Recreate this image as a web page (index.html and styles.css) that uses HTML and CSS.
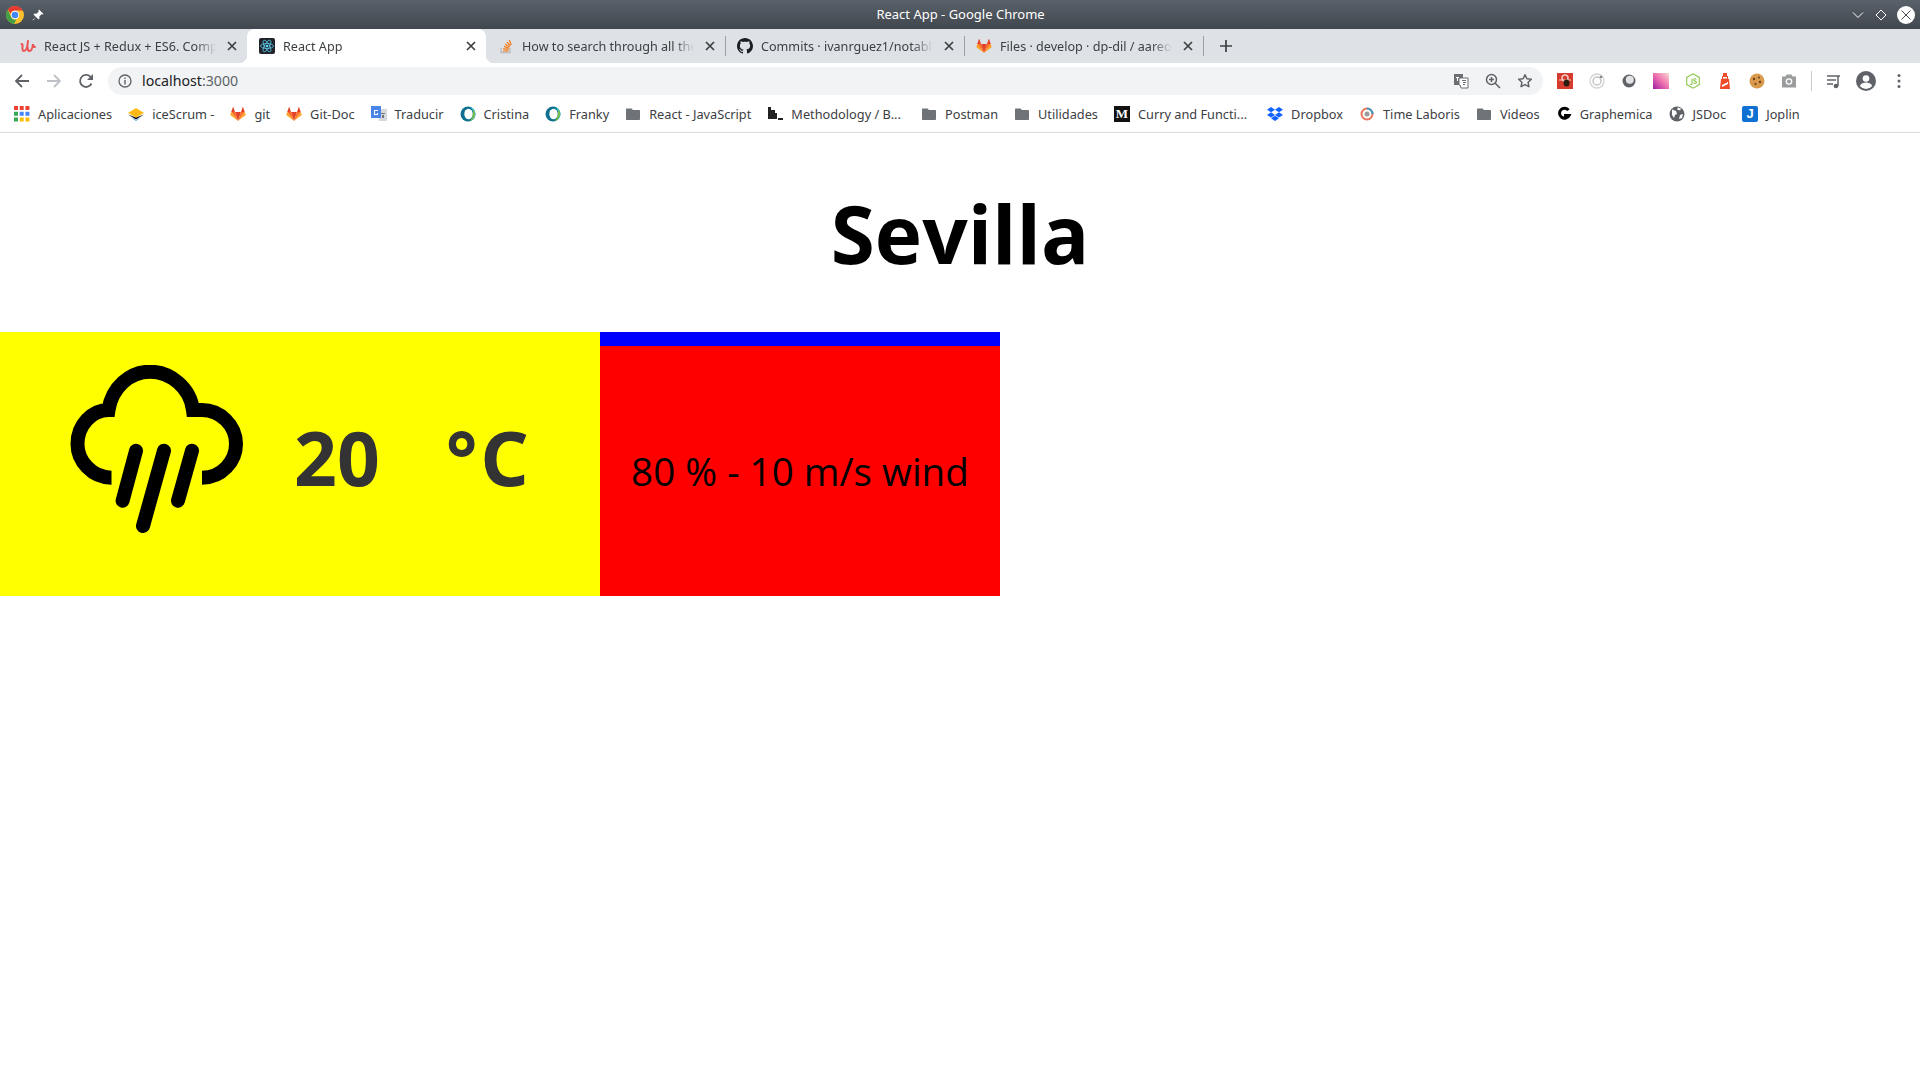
FILE: index.html
```html
<!DOCTYPE html>
<html lang="es">
<head>
  <meta charset="UTF-8">
  <title>React App</title>
  <link rel="stylesheet" href="styles.css">
</head>
<body>
  <svg class="defs" width="0" height="0">
    <symbol id="gitlab" viewBox="0 0 16 16">
      <path fill="#e24329" d="M8 15 11 6H5z"/>
      <path fill="#fc6d26" d="M8 15 5 6H1.2zM8 15l3-9h3.8z"/>
      <path fill="#fca326" d="M1.2 6 .4 8.6c-.1.3 0 .5.2.7L8 15zM14.8 6l.8 2.6c.1.3 0 .5-.2.7L8 15z"/>
      <path fill="#e24329" d="M1.2 6H5L3.4 1.2c-.1-.2-.4-.2-.5 0zM14.8 6H11l1.6-4.8c.1-.2.4-.2.5 0z"/>
    </symbol>
    <symbol id="folder" viewBox="0 0 16 16">
      <path fill="#6f7276" d="M2 2.5h4.5L8 4h6c.6 0 1 .4 1 1v8c0 .6-.4 1-1 1H2c-.6 0-1-.4-1-1V3.500c0-.6.4-1 1-1z"/>
    </symbol>
    <symbol id="close" viewBox="0 0 16 16">
      <path fill="none" stroke="#3c4043" stroke-width="1.700" d="M4 4l8 8M12 4l-8 8"/>
    </symbol>
    <symbol id="ring" viewBox="0 0 16 16">
      <circle cx="8" cy="8" r="7.500" fill="#0f6f8f"/>
      <path fill="#3ecbe0" d="M8 .5a7.500 7.500 0 0 1 0 15 5 7 0 0 0 0-15z"/>
      <path fill="#79bd3f" d="M13 3a7.500 7.500 0 0 1-4 12.400c3-1.500 4.500-7 4-12.400z"/>
      <ellipse cx="8.500" cy="8" rx="4.200" ry="5.200" fill="#fff"/>
    </symbol>
  </svg>

  <header class="browser">
    <div class="titlebar">
      <div class="title-left">
        <svg class="chrome-logo" width="18" height="18" viewBox="0 0 18 18">
          <circle cx="9" cy="9" r="9" fill="#fbc02d"/>
          <path fill="#e53935" d="M9 0a9 9 0 0 1 7.800 4.500H9a4.500 4.500 0 0 0-4.300 3.200L1.800 3.600A9 9 0 0 1 9 0z"/>
          <path fill="#43a047" d="M1.800 3.600 5.100 11.300A4.500 4.500 0 0 0 10.500 13.300L8 18A9 9 0 0 1 1.800 3.600z"/>
          <circle cx="9" cy="9" r="4.200" fill="#fff"/>
          <circle cx="9" cy="9" r="3.300" fill="#4285f4"/>
        </svg>
        <svg class="pin" width="12" height="12" viewBox="0 0 12 12"><path fill="#fff" d="M7 .5 11.500 5l-1 .6-1-.3L7.300 7.500 7.500 9.500 6.500 10.500 4 8 1 11.500.5 11 4 8 1.500 5.500 2.500 4.500 4.500 4.700 6.700 2.500 6.400 1.500z"/></svg>
      </div>
      <div class="window-title">React App - Google Chrome</div>
      <div class="window-controls">
        <svg width="14" height="14" viewBox="0 0 14 14"><path fill="none" stroke="#fff" d="M2 4.500l5 5 5-5"/></svg>
        <svg width="14" height="14" viewBox="0 0 14 14"><path fill="none" stroke="#fff" d="M7 2l5 5-5 5-5-5z"/></svg>
        <svg width="18" height="18" viewBox="0 0 18 18"><circle cx="9" cy="9" r="9" fill="#fff"/><path fill="none" stroke="#41474e" d="M4.500 4.500l9 9M13.500 4.500l-9 9"/></svg>
      </div>
    </div>

    <div class="tabstrip">
      <div class="tab">
        <svg class="favicon" viewBox="0 0 16 16"><path fill="none" stroke="#ec5252" stroke-width="2" stroke-linecap="round" d="M1.500 6c1 0 1.200 1 1 2.500C2.200 11 2.500 13 4 13c2 0 3.500-4 4-10M7.500 9c0 3 .8 4 2 4 2 0 3-3 3.500-7 .2 2 .8 3 2 3"/></svg>
        <span class="tab-title">React JS + Redux + ES6. Completo</span>
        <svg class="tab-close"><use href="#close"/></svg>
      </div>
      <div class="tab active">
        <svg class="favicon" viewBox="0 0 16 16"><rect width="16" height="16" rx="2" fill="#20232a"/><g fill="none" stroke="#61dafb" stroke-width=".7"><ellipse cx="8" cy="8" rx="6.500" ry="2.500"/><ellipse cx="8" cy="8" rx="6.500" ry="2.500" transform="rotate(60 8 8)"/><ellipse cx="8" cy="8" rx="6.500" ry="2.500" transform="rotate(120 8 8)"/></g><circle cx="8" cy="8" r="1.300" fill="#61dafb"/></svg>
        <span class="tab-title">React App</span>
        <svg class="tab-close"><use href="#close"/></svg>
      </div>
      <div class="tab">
        <svg class="favicon" viewBox="0 0 16 16"><path fill="none" stroke="#bcbbbb" stroke-width="1.300" d="M3 10v4.500h9V10"/><path fill="none" stroke="#f48024" stroke-width="1.300" d="M5 12.800h5.500M5.200 10.600l5.400.7M5.900 8.300l5.100 1.900M7.100 6l4.500 3M9 3.800l3.300 4.100M11.300 2l2 4.900"/></svg>
        <span class="tab-title">How to search through all the notes</span>
        <svg class="tab-close"><use href="#close"/></svg>
      </div>
      <div class="tab">
        <svg class="favicon" viewBox="0 0 16 16"><path fill="#1b1f23" d="M8 0C3.600 0 0 3.600 0 8c0 3.500 2.300 6.500 5.500 7.600.4.100.5-.2.500-.4v-1.400c-2.200.5-2.700-1-2.700-1-.4-.9-.9-1.200-.9-1.200-.7-.5.100-.5.100-.5.800.1 1.200.8 1.200.8.700 1.200 1.900.9 2.300.7.100-.5.300-.9.500-1.100-1.800-.2-3.600-.9-3.600-4 0-.9.300-1.600.8-2.100-.1-.2-.4-1 .1-2.100 0 0 .7-.2 2.200.8.600-.2 1.300-.3 2-.3s1.400.1 2 .3c1.500-1 2.200-.8 2.200-.8.400 1.100.2 1.900.1 2.100.5.600.8 1.300.8 2.100 0 3.100-1.900 3.700-3.700 3.900.3.300.6.800.6 1.500v2.200c0 .2.100.5.600.4C13.700 14.500 16 11.500 16 8c0-4.400-3.600-8-8-8z"/></svg>
        <span class="tab-title">Commits · ivanrguez1/notable-notes</span>
        <svg class="tab-close"><use href="#close"/></svg>
      </div>
      <div class="tab">
        <svg class="favicon"><use href="#gitlab"/></svg>
        <span class="tab-title">Files · develop · dp-dil / aareon-api</span>
        <svg class="tab-close"><use href="#close"/></svg>
      </div>
      <svg class="new-tab" width="16" height="16" viewBox="0 0 16 16"><path fill="none" stroke="#3c4043" stroke-width="1.700" d="M8 2v12M2 8h12"/></svg>
    </div>

    <div class="toolbar">
      <button class="tool"><svg width="16" height="16" viewBox="0 0 16 16"><path fill="none" stroke="#5f6368" stroke-width="1.800" d="M15 8H2M8 2 2 8l6 6"/></svg></button>
      <button class="tool"><svg width="16" height="16" viewBox="0 0 16 16"><path fill="none" stroke="#bdc1c6" stroke-width="1.800" d="M1 8h13M8 2l6 6-6 6"/></svg></button>
      <button class="tool"><svg width="16" height="16" viewBox="0 0 16 16"><path fill="none" stroke="#5f6368" stroke-width="1.800" d="M13.500 10.500A6 6 0 1 1 12.300 3.700L14 5.500"/><path fill="#5f6368" d="M15 1v6H9z"/></svg></button>
      <div class="omnibox">
        <svg class="info" width="14" height="14" viewBox="0 0 14 14"><circle cx="7" cy="7" r="6" fill="none" stroke="#5f6368" stroke-width="1.300"/><path fill="#5f6368" d="M6.300 6h1.400v4.500H6.300zM6.300 3.500h1.400v1.400H6.300z"/></svg>
        <span class="url">localhost<span class="port">:3000</span></span>
        <div class="omni-actions">
          <button class="tool"><svg width="16" height="16" viewBox="0 0 16 16"><path fill="#6b6f73" d="M1 1h9v11H1z"/><path fill="#fff" stroke="#6b6f73" d="M6 5h9v10H8l-1-3H6z"/><path fill="#fff" d="M3 4h3v1H5v3H4V5H3z"/><path fill="#6b6f73" d="M9 7h4v1h-4zM10 9h3v1h-3zM10 11h2v1h-2z"/></svg></button>
          <button class="tool"><svg width="16" height="16" viewBox="0 0 16 16"><circle cx="6.500" cy="6.500" r="5" fill="none" stroke="#5f6368" stroke-width="1.500"/><path fill="none" stroke="#5f6368" stroke-width="1.500" d="M10 10l5 5M4 6.500h5M6.500 4v5"/></svg></button>
          <button class="tool"><svg width="16" height="16" viewBox="0 0 16 16"><path fill="none" stroke="#5f6368" stroke-width="1.500" stroke-linejoin="round" d="M8 1.800l1.900 4 4.400.5-3.200 3 .8 4.400L8 11.600l-3.900 2.100.8-4.400-3.200-3 4.400-.5z"/></svg></button>
        </div>
      </div>
      <div class="extensions">
        <button class="tool"><svg width="16" height="16" viewBox="0 0 16 16"><rect width="16" height="16" fill="#d63c2e"/><circle cx="8" cy="5" r="3" fill="none" stroke="#f6c9c3" stroke-width="1.500"/><path fill="none" stroke="#f6c9c3" d="M2 7h12"/><ellipse cx="9.500" cy="10" rx="3" ry="3.500" fill="#2b1a10"/></svg></button>
        <button class="tool"><svg width="16" height="16" viewBox="0 0 16 16"><circle cx="8" cy="8" r="7" fill="none" stroke="#d2d3d3" stroke-width="1.300"/><circle cx="8" cy="8" r="4" fill="none" stroke="#c4c5c5" stroke-width="1.500"/><circle cx="12" cy="4" r="1.300" fill="#8a8a8a"/></svg></button>
        <button class="tool"><svg width="16" height="16" viewBox="0 0 16 16"><circle cx="8" cy="8" r="6.500" fill="#5f6368"/><circle cx="8.800" cy="6.800" r="4" fill="#e2e3e4"/></svg></button>
        <button class="tool"><span class="ext-pink"></span></button>
        <button class="tool"><svg width="16" height="16" viewBox="0 0 16 16"><path fill="#fff" stroke="#8cc84b" stroke-width="1.100" d="M8 .8l6.300 3.600v7.200L8 15.200l-6.300-3.600V4.400z"/><path fill="none" stroke="#8cc84b" stroke-width="1.100" d="M7 5.500v5c0 1-1 1.300-1.800.7M11.300 6.500c-.8-1.200-2.800-.8-2.600.6.200 1.300 2.900.8 2.800 2.300-.1 1.300-2.400 1.400-3 .2"/></svg></button>
        <button class="tool"><svg width="16" height="16" viewBox="0 0 16 16"><path fill="#ee4b2b" d="M6 0h4v3h1v3h1l1 10H3L4 6h1V3h1z"/><path fill="#fff" d="M6 4h4v1.500H6zM5 12l6-3v2l-6 3z"/></svg></button>
        <button class="tool"><svg width="16" height="16" viewBox="0 0 16 16"><circle cx="8" cy="8" r="7.500" fill="#d99a4e"/><circle cx="5" cy="6" r="1.200" fill="#6a3d1a"/><circle cx="10" cy="4.500" r="1" fill="#6a3d1a"/><circle cx="11" cy="9" r="1.200" fill="#6a3d1a"/><circle cx="6.500" cy="11" r="1.100" fill="#6a3d1a"/></svg></button>
        <button class="tool"><svg width="16" height="16" viewBox="0 0 16 16"><path fill="#9a9c9e" d="M5.500 1.500h5l1 2H15v11H1v-11h3.500z"/><circle cx="8" cy="8.500" r="3.300" fill="#fff"/><circle cx="8" cy="8.500" r="2" fill="#9a9c9e"/></svg></button>
        <span class="tool-sep"></span>
        <button class="tool"><svg width="16" height="16" viewBox="0 0 16 16"><path fill="none" stroke="#5f6368" stroke-width="1.500" d="M1 3h13M1 7h9M1 11h6M12 3v10"/><circle cx="10" cy="13" r="2.300" fill="#5f6368"/></svg></button>
        <button class="tool"><svg width="20" height="20" viewBox="0 0 20 20"><circle cx="10" cy="10" r="10" fill="#5f6368"/><circle cx="10" cy="7.500" r="3.300" fill="#fff"/><path fill="#fff" d="M3.800 15c1-2.600 4-3.500 6.200-3.500s5.200.9 6.200 3.500a8 8 0 0 1-12.400 0z"/></svg></button>
        <button class="tool tool-menu"><svg width="4" height="16" viewBox="0 0 4 16"><circle cx="2" cy="2.500" r="1.500" fill="#5f6368"/><circle cx="2" cy="8" r="1.500" fill="#5f6368"/><circle cx="2" cy="13.500" r="1.500" fill="#5f6368"/></svg></button>
      </div>
    </div>

    <nav class="bookmarks">
      <a class="bookmark"><svg viewBox="0 0 14 14"><path fill="#ea4335" d="M0 0h3.500v3.500H0zM5 0h3.500v3.500H5zM10 0h3.500v3.500H10z"/><path fill="#34a853" d="M0 5h3.500v3.500H0zM0 10h3.500v3.500H0z"/><path fill="#4285f4" d="M5 5h3.500v3.500H5zM10 5h3.500v3.500H10z"/><path fill="#fbbc04" d="M5 10h3.500v3.500H5zM10 10h3.500v3.500H10z"/></svg>Aplicaciones</a>
      <a class="bookmark"><svg viewBox="0 0 16 16"><path fill="#111" d="M0 8.500l8 5 8-5-8 3z"/><path fill="#fdb913" d="M0 7l8-5 8 5-8 4.500z"/><path fill="#3a9bd8" d="M3 11l5 3 5-3-5 4z"/></svg>iceScrum -</a>
      <a class="bookmark"><svg><use href="#gitlab"/></svg>git</a>
      <a class="bookmark"><svg><use href="#gitlab"/></svg>Git-Doc</a>
      <a class="bookmark"><svg viewBox="0 0 16 16"><path fill="#d5d8dc" d="M6 3h10v12H8z"/><path fill="#4a86e8" d="M0 0h10v12H0z"/><path fill="#fff" d="M3 4h4v1H4v3h2V7h1v2H3z"/><path fill="#777" d="M10 7h4v1h-4zM11 9h2v3h-2z"/></svg>Traducir</a>
      <a class="bookmark"><svg><use href="#ring"/></svg>Cristina</a>
      <a class="bookmark"><svg><use href="#ring"/></svg>Franky</a>
      <a class="bookmark"><svg><use href="#folder"/></svg>React - JavaScript</a>
      <a class="bookmark clipped"><svg viewBox="0 0 16 16"><path fill="#222" d="M1 1h3v3h4v3h2v6H1zM11 12h5v2h-5z"/></svg>Methodology / B...</a>
      <a class="bookmark"><svg><use href="#folder"/></svg>Postman</a>
      <a class="bookmark"><svg><use href="#folder"/></svg>Utilidades</a>
      <a class="bookmark clipped"><span class="medium-icon">M</span>Curry and Functi...</a>
      <a class="bookmark"><svg viewBox="0 0 16 16"><path fill="#0f62fe" d="M4 1 0 3.700 4 6.300 8 3.700zM12 1 8 3.700l4 2.600 4-2.600zM0 8.900l4 2.600 4-2.600-4-2.600zM12 6.300 8 8.900l4 2.600 4-2.600zM4 12.300l4 2.700 4-2.700-4-2.500z"/></svg>Dropbox</a>
      <a class="bookmark"><svg viewBox="0 0 16 16"><circle cx="8" cy="8" r="5.500" fill="none" stroke="#e8735a" stroke-width="2"/><path fill="none" stroke="#3d9bc4" stroke-width="2" d="M8 2.500a5.500 5.500 0 0 1 5.500 5.500"/><circle cx="8" cy="8" r="2.500" fill="#9a9a9a"/></svg>Time Laboris</a>
      <a class="bookmark"><svg><use href="#folder"/></svg>Videos</a>
      <a class="bookmark"><svg viewBox="0 0 16 16"><path fill="none" stroke="#000" stroke-width="3" d="M12.500 4.200A5 5 0 1 0 13 9.500H8"/></svg>Graphemica</a>
      <a class="bookmark"><svg viewBox="0 0 16 16"><circle cx="8" cy="8" r="7.500" fill="#5f6368"/><path fill="#fff" d="M3 3.500 7 5l1 3-2 1-1 3-2-3zM9 1.500l3 1-1 2-3-1zM11 9l3-1-1 4-3 1z"/></svg>JSDoc</a>
      <a class="bookmark"><span class="joplin-icon">J</span>Joplin</a>
    </nav>
  </header>

  <main>
    <h1 class="city">Sevilla</h1>
    <section class="weather">
      <div class="temperature">
        <svg class="weather-icon" width="174" height="168" viewBox="0 0 174 168">
          <path fill="none" stroke="#000" stroke-width="14" d="M41.500 112.700C22 112.700 7.500 96 7.500 79 7.500 60 22 45 38.500 45 42 22 60 6.700 80 6.700 100 6.700 120 22 123 45H132C150 45 166 60 166 79 166 96 152 112.700 132 112.700"/>
          <path fill="none" stroke="#000" stroke-width="14" stroke-linecap="round" d="M66 85.700 52.600 135.700M94 85.700 73 161M122 85.700 108 135.700"/>
        </svg>
        <span class="temp-value">20</span>
        <span class="temp-unit">°C</span>
      </div>
      <div class="details">80 % - 10 m/s wind</div>
    </section>
  </main>
</body>
</html>
```
FILE: styles.css
```css
:root {
  --chrome-text: #3c4043;
  --strip: #dee1e6;
}
* { box-sizing: border-box; }
body {
  margin: 0;
  background: #fff;
  font-family: "Noto Sans", "Open Sans", sans-serif;
  color: #000;
}
button {
  border: none;
  background: none;
  padding: 0;
}
.defs { display: block; height: 0; }

/* window title */
.titlebar {
  display: flex;
  align-items: center;
  height: 29px;
  padding: 0 5px 0 6px;
  background: linear-gradient(#59616a, #41474e);
  color: #fff;
}
.title-left {
  flex: 1;
  display: flex;
  align-items: center;
}
.pin { margin-left: 8px; }
.window-title {
  padding-bottom: 2px;
  font-size: 13px;
}
.window-controls {
  flex: 1;
  display: flex;
  align-items: center;
  justify-content: flex-end;
  gap: 9px;
}

/* tabs */
.tabstrip {
  display: flex;
  align-items: center;
  height: 34px;
  padding-left: 8px;
  background: var(--strip);
}
.tab {
  position: relative;
  display: flex;
  align-items: center;
  gap: 8px;
  width: 239px;
  height: 34px;
  padding: 0 7px 0 12px;
  font-size: 12.600px;
  color: var(--chrome-text);
}
.tab::after {
  content: "";
  position: absolute;
  right: -1px;
  top: 7px;
  bottom: 7px;
  width: 1px;
  background: #9aa0a6;
}
.tab:first-child::after,
.tab.active::after { display: none; }
.tab.active {
  background: #fff;
  border-radius: 8px 8px 0 0;
}
.tab.active::before {
  content: "";
  position: absolute;
  left: -8px;
  right: -8px;
  bottom: 0;
  height: 8px;
  background:
    radial-gradient(circle at 0 0, transparent 8px, #fff 8.500px) left bottom / 8px 8px no-repeat,
    radial-gradient(circle at 100% 0, transparent 8px, #fff 8.500px) right bottom / 8px 8px no-repeat;
}
.favicon {
  flex: none;
  width: 16px;
  height: 16px;
}
.tab-title {
  flex: 1;
  min-width: 0;
  overflow: hidden;
  white-space: nowrap;
  -webkit-mask-image: linear-gradient(to right, #000 calc(100% - 20px), transparent);
  mask-image: linear-gradient(to right, #000 calc(100% - 20px), transparent);
}
.tab-close {
  position: relative;
  flex: none;
  width: 16px;
  height: 16px;
}
.new-tab { margin-left: 15px; }

/* toolbar */
.toolbar {
  display: flex;
  align-items: flex-end;
  height: 32px;
  padding-left: 6px;
}
.tool {
  display: flex;
  align-items: center;
  justify-content: center;
  flex: none;
  width: 32px;
  height: 28px;
}
.omnibox {
  display: flex;
  align-items: center;
  width: 1435px;
  height: 28px;
  margin-left: 6px;
  padding-left: 10px;
  background: #f1f3f4;
  border-radius: 14px;
}
.url {
  margin-left: 10px;
  padding-bottom: 2px;
  font-size: 14.200px;
  color: #202124;
}
.port { color: #5f6368; }
.omni-actions {
  display: flex;
  margin-left: auto;
  padding-right: 2px;
}
.extensions {
  display: flex;
  align-items: center;
  margin-left: 6px;
}
.tool-sep {
  width: 1px;
  height: 20px;
  margin: 0 6px;
  background: #c8cbcf;
}
.tool-menu { margin-left: 1px; }
.ext-pink {
  width: 16px;
  height: 16px;
  background: linear-gradient(45deg, #9c1fa0, #ee6fb0 50%, #fbd7d0);
}

/* bookmarks */
.bookmarks {
  display: flex;
  align-items: center;
  gap: 16px;
  height: 38px;
  padding-left: 14px;
  border-bottom: 1px solid #dadce0;
  font-size: 12.760px;
  color: var(--chrome-text);
}
.bookmark {
  display: flex;
  align-items: center;
  gap: 8px;
  white-space: nowrap;
}
.bookmark.clipped { padding-right: 4px; }
.bookmark svg {
  flex: none;
  width: 16px;
  height: 16px;
}
.medium-icon,
.joplin-icon {
  display: flex;
  align-items: center;
  justify-content: center;
  width: 16px;
  height: 16px;
  color: #fff;
  font: bold 13px "Liberation Serif", serif;
  background: #111;
}
.joplin-icon {
  font-family: "Liberation Sans", sans-serif;
  background: #1071d3;
  border-radius: 2px;
}

/* weather page */
.city {
  margin: 0;
  height: 199px;
  padding-top: 45px;
  text-align: center;
  font-family: "Open Sans", sans-serif;
  font-size: 80px;
  font-weight: 700;
  line-height: 109px;
}
.weather {
  display: flex;
  width: 1000px;
  height: 264px;
}
.temperature {
  display: flex;
  align-items: flex-start;
  width: 600px;
  padding: 33px 0 0 70px;
  background: #ff0;
  color: #333;
  font-family: "Noto Sans", sans-serif;
  font-size: 75px;
  font-weight: 700;
  line-height: 102px;
}
.weather-icon { flex: none; }
.temp-value {
  margin: 41px 0 0 50px;
}
.temp-unit {
  margin: 41px 0 0 66px;
  letter-spacing: 3px;
}
.details {
  display: flex;
  align-items: center;
  justify-content: center;
  width: 400px;
  background: #f00;
  border-top: 14px solid #00f;
  font-family: "Open Sans", sans-serif;
  font-size: 38.600px;
}
```
